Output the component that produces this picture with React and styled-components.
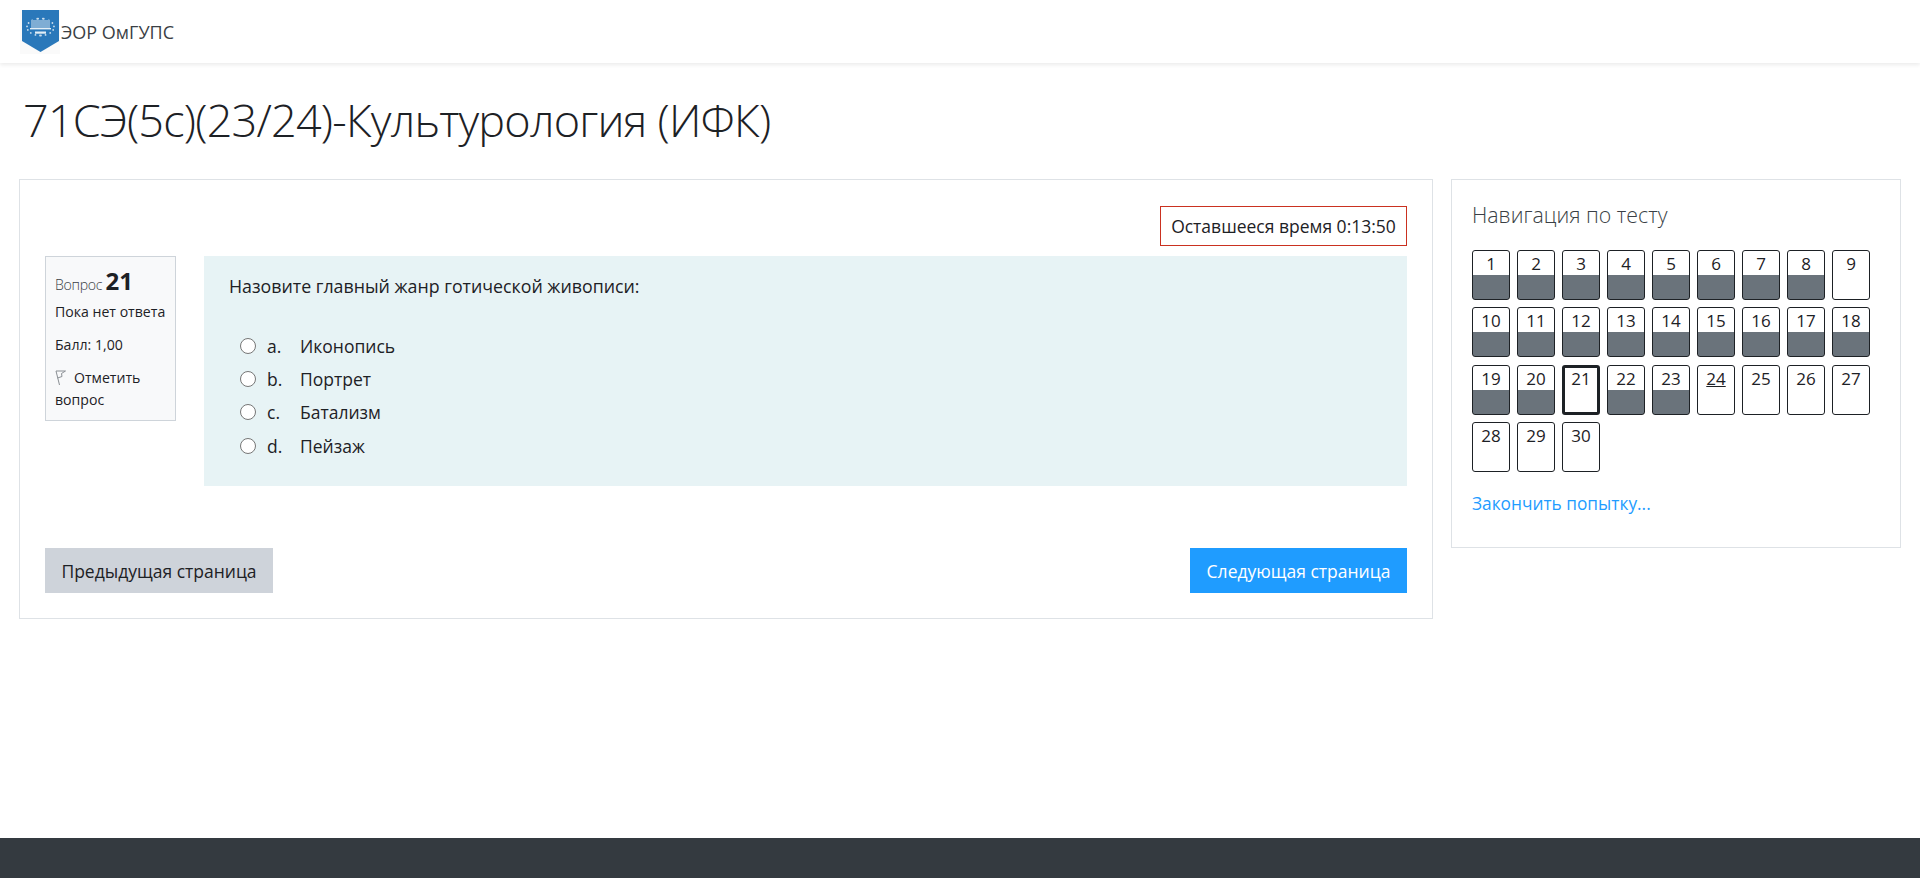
import styled, { createGlobalStyle } from "styled-components";

const Global = createGlobalStyle`
  html, body { margin: 0; padding: 0; background: #fff; }
  body {
    font-family: "Open Sans", "Noto Sans", sans-serif;
    font-size: 17.5px;
    line-height: 24px;
    color: #1d2125;
  }
`

const Page = styled.div`
  display: flex;
  flex-direction: column;
  height: 878px;
  overflow: hidden;
`
const Navbar = styled.header`
  display: flex;
  align-items: center;
  height: 63px;
  flex: none;
  padding-left: 20px;
  box-shadow: 0 2px 4px rgba(0, 0, 0, .08);
  font-size: 18px;
  color: #3a3f45;
`
const Brand = styled.span`
  margin-left: 1px;
`
const Main = styled.main`
  flex: 1;
  padding: 0 19px;
`
const Title = styled.h1`
  margin: 0;
  padding: 25px 0 0 4px;
  height: 116px;
  box-sizing: border-box;
  font-size: 45px;
  line-height: 64px;
  font-weight: 300;
  letter-spacing: -0.8px;
  color: #1d2125;
`
const Columns = styled.div`
  display: grid;
  grid-template-columns: 1414px 450px;
  column-gap: 18px;
  align-items: start;
`
const Panel = styled.section`
  box-sizing: border-box;
  border: 1.5px solid #dee2e6;
`
const QuizPanel = styled(Panel)`
  height: 440px;
  padding: 26px 25px 0 25px;
`
const TimerRow = styled.div`
  display: flex;
  justify-content: flex-end;
  height: 50px;
`
const Timer = styled.div`
  box-sizing: border-box;
  width: 247px;
  height: 40px;
  border: 1px solid #ca3120;
  line-height: 38px;
  text-align: center;
`
const Question = styled.div`
  display: grid;
  grid-template-columns: 131px 1203px;
  column-gap: 28px;
  align-items: start;
`
const InfoBox = styled.div`
  box-sizing: border-box;
  height: 165px;
  padding: 10px 9px 0 9px;
  background: #f8f9fa;
  border: 1px solid #ced4da;
  font-size: 14.1px;
`
const QuestionNo = styled.div`
  font-weight: 300;
  color: #3a3f45;
  height: 34px;
  line-height: 28px;
  letter-spacing: -0.3px;
  b {
    font-size: 24px;
    font-weight: 700;
    color: #1d2125;
    letter-spacing: 0;
  }
`
const InfoLine = styled.div`
  height: 33px;
  line-height: 22px;
`
const FlagLine = styled.div`
  line-height: 22px;
  svg { vertical-align: -3px; margin-right: 8px; }
`
const Content = styled.div`
  box-sizing: border-box;
  height: 230px;
  padding: 18px 25px 0 25px;
  background: #e7f3f5;
`
const Prompt = styled.div`
  height: 55px;
  font-size: 17.8px;
`
const Option = styled.label`
  display: flex;
  align-items: center;
  height: 33.3px;
  padding-left: 11px;
`
const Radio = styled.span`
  box-sizing: border-box;
  width: 16px;
  height: 16px;
  margin-right: 11px;
  border: 1.5px solid #767676;
  border-radius: 50%;
  background: #fff;
  flex: none;
`
const OptionKey = styled.span`
  width: 33px;
`
const Actions = styled.div`
  display: flex;
  justify-content: space-between;
  margin-top: 62px;
`
const Button = styled.button`
  box-sizing: border-box;
  width: ${p => p.$width}px;
  height: 45px;
  padding: 0;
  border: 0;
  border-radius: 0;
  font: inherit;
  background: ${p => p.$primary ? "#1f9cff" : "#ced3da"};
  color: ${p => p.$primary ? "#fff" : "#1d2125"};
`
const NavPanel = styled(Panel)`
  height: 369px;
  padding: 19px 21px 0 20px;
`
const NavTitle = styled.h5`
  margin: 0;
  height: 51px;
  font-size: 21.3px;
  line-height: 32px;
  font-weight: 300;
  color: #3a3f45;
`
const NavGrid = styled.div`
  display: grid;
  grid-template-columns: repeat(9, 38px);
  grid-auto-rows: 50px;
  column-gap: 7px;
  row-gap: 7.33px;
`
const Cell = styled.a`
  box-sizing: border-box;
  display: block;
  border: ${p => p.$current ? "3px" : "1px"} solid #1d2125;
  border-radius: 3px;
  overflow: hidden;
  padding-top: ${p => p.$current ? "1px" : "3px"};
  text-align: center;
  font-size: 17px;
  line-height: 20px;
  text-decoration: ${p => p.$flagged ? "underline" : "none"};
  color: #1d2125;
  background: ${p => p.$answered
    ? "linear-gradient(to bottom, #fff 24px, #6a737b 24px)"
    : "#fff"};
`
const FinishLink = styled.a`
  display: block;
  margin-top: 20px;
  font-size: 17.3px;
  color: #1f9cff;
`
const Footer = styled.footer`
  height: 40px;
  flex: none;
  background: #343a40;
`

const options = [
  ["a.", "Иконопись"],
  ["b.", "Портрет"],
  ["c.", "Батализм"],
  ["d.", "Пейзаж"],
]

const answered = n => n <= 23 && n !== 9 && n !== 21

function Logo() {
  const leaves = [0, 1, 2, 3, 4, 5, 6, 7, 8]
  return (
    <svg width="40" height="44" viewBox="0 0 40 44" style={{ flex: "none" }}>
      <rect width="40" height="44" fill="#fafafa" />
      <path d="M2 0h37v31l-18.5 11-18.5-11z" fill="#2a78ba" />
      {leaves.map(i => {
        const a = (-100 + i * 24) * Math.PI / 180
        const x = 13.5 * Math.cos(a)
        const y = 8.5 * Math.sin(a)
        return (
          <g key={i}>
            <circle cx={20.5 + x} cy={17 + y} r="0.9" fill="#c9dcec" />
            <circle cx={20.5 - x} cy={17 + y} r="0.9" fill="#c9dcec" />
          </g>
        )
      })}
      <rect x="11" y="10" width="19" height="8" fill="#7fadd4" />
      <rect x="10" y="18" width="21" height="1.4" fill="#e3eef6" />
      <rect x="15" y="21.5" width="11" height="2.2" fill="#e3eef6" />
    </svg>
  )
}

function Flag() {
  return (
    <svg width="11" height="16" viewBox="0 0 11 16" fill="none" stroke="#8a8f94" strokeWidth="1">
      <path d="M1 1l3.5 14M1 1h9.5L6.5 3.5 7 6.5 2.5 8" />
    </svg>
  )
}

export default function App() {
  const cells = Array.from({ length: 30 }, (_, i) => i + 1)
  return (
    <Page>
      <Global />
      <Navbar>
        <Logo />
        <Brand>ЭОР ОмГУПС</Brand>
      </Navbar>
      <Main>
        <Title>71СЭ(5с)(23/24)-Культурология (ИФК)</Title>
        <Columns>
          <QuizPanel>
            <TimerRow>
              <Timer>Оставшееся время 0:13:50</Timer>
            </TimerRow>
            <Question>
              <InfoBox>
                <QuestionNo>Вопрос <b>21</b></QuestionNo>
                <InfoLine>Пока нет ответа</InfoLine>
                <InfoLine>Балл: 1,00</InfoLine>
                <FlagLine><Flag />Отметить вопрос</FlagLine>
              </InfoBox>
              <Content>
                <Prompt>Назовите главный жанр готической живописи:</Prompt>
                {options.map(([key, text]) => (
                  <Option key={key}>
                    <Radio />
                    <OptionKey>{key}</OptionKey>
                    {text}
                  </Option>
                ))}
              </Content>
            </Question>
            <Actions>
              <Button $width={228}>Предыдущая страница</Button>
              <Button $width={217} $primary>Следующая страница</Button>
            </Actions>
          </QuizPanel>
          <NavPanel>
            <NavTitle>Навигация по тесту</NavTitle>
            <NavGrid>
              {cells.map(n => (
                <Cell key={n} $answered={answered(n)} $current={n === 21} $flagged={n === 24}>{n}</Cell>
              ))}
            </NavGrid>
            <FinishLink>Закончить попытку...</FinishLink>
          </NavPanel>
        </Columns>
      </Main>
      <Footer />
    </Page>
  )
}
